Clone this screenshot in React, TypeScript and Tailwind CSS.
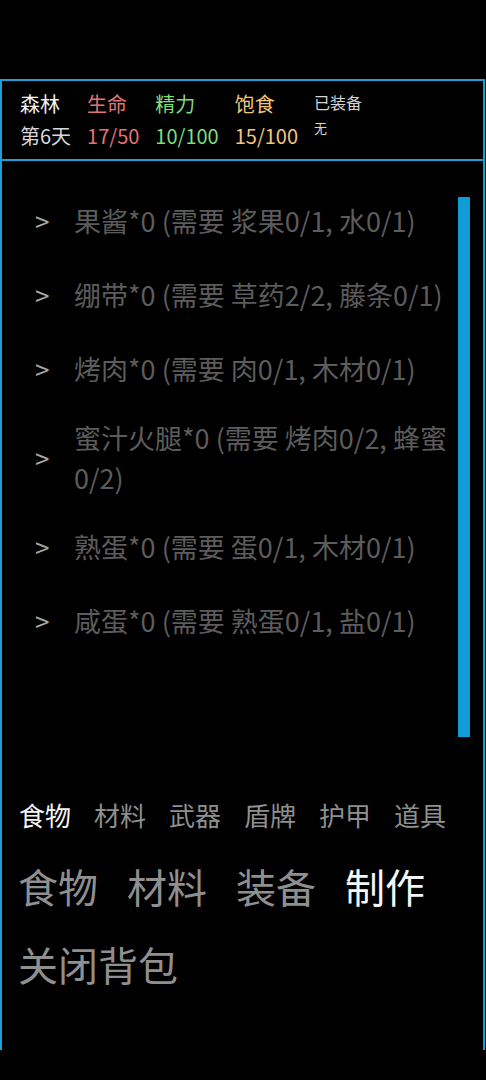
import React from 'react';

const recipes = [
  '果酱*0 (需要 浆果0/1, 水0/1)',
  '绷带*0 (需要 草药2/2, 藤条0/1)',
  '烤肉*0 (需要 肉0/1, 木材0/1)',
  '蜜汁火腿*0 (需要 烤肉0/2, 蜂蜜0/2)',
  '熟蛋*0 (需要 蛋0/1, 木材0/1)',
  '咸蛋*0 (需要 熟蛋0/1, 盐0/1)',
];

const subTabs = ['食物', '材料', '武器', '盾牌', '护甲', '道具'];
const mainTabs = ['食物', '材料', '装备', '制作'];

export default function App() {
  return (
    <div className="min-h-[1080px] bg-black font-['Noto_Sans_CJK_SC','Noto_Sans',sans-serif]">
      <div className="h-[79px]" />

      <div className="flex h-[971px] w-[485px] flex-col border-x-2 border-t-2 border-[#1c9fd6]">
        {/* Status header */}
        <div className="flex h-[80px] shrink-0 items-start gap-4 border-b-2 border-[#1c9fd6] pl-[18px] pt-[7px] text-[20px] leading-[32px]">
          <div className="flex flex-col">
            <span className="text-[#f2f2f2]">森林</span>
            <span className="text-[#d8d8d8]">第6天</span>
          </div>
          <div className="flex flex-col text-[#e57373]">
            <span>生命</span>
            <span>17/50</span>
          </div>
          <div className="flex flex-col text-[#7edc7e]">
            <span>精力</span>
            <span>10/100</span>
          </div>
          <div className="flex flex-col text-[#f3c77a]">
            <span>饱食</span>
            <span>15/100</span>
          </div>
          <div className="flex flex-col text-[#d4d4d4]">
            <span className="text-[16px] leading-[28px]">已装备</span>
            <span className="text-[13px] leading-[24px]">无</span>
          </div>
        </div>

        {/* Recipe list */}
        <div className="flex h-[598px] shrink-0">
          <div className="flex-1 pl-[33px] pr-[4px] pt-[23px] text-[27px]">
            {recipes.map((r) => (
              <div key={r} className="flex min-h-[74px] items-center py-[12px]">
                <span className="w-[39px] shrink-0 text-[26px] leading-[40px] text-[#a8a8a8]">&gt;</span>
                <span className="leading-[40px] text-[#5c5c5c]">{r}</span>
              </div>
            ))}
          </div>
          <div className="mr-[13px] mt-[36px] h-[540px] w-[12px] bg-[#0e9bd6]" />
        </div>

        {/* Category tabs */}
        <div className="mt-[38px] flex gap-[23px] pl-[17px] text-[26px] leading-[36px]">
          {subTabs.map((t, i) => (
            <span key={t} className={i === 0 ? 'text-[#f5f5f5]' : 'text-[#8f8f8f]'}>
              {t}
            </span>
          ))}
        </div>

        <div className="mt-[29px] flex gap-[29px] pl-[16px] text-[40px] leading-[48px]">
          {mainTabs.map((t, i) => (
            <span key={t} className={i === 3 ? 'text-[#f5f5f5]' : 'text-[#8f8f8f]'}>
              {t}
            </span>
          ))}
        </div>

        <div className="mt-[30px] pl-[16px] text-[40px] leading-[48px] text-[#8f8f8f]">关闭背包</div>
      </div>
    </div>
  );
}
